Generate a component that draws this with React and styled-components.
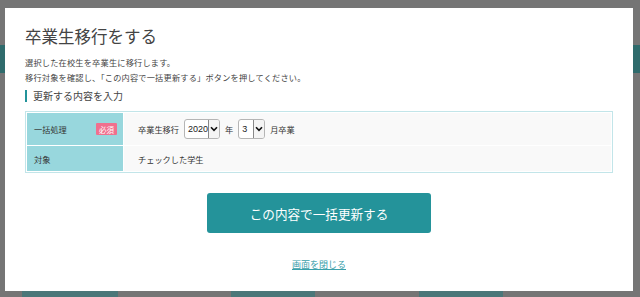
import React from 'react';
import styled, { createGlobalStyle } from 'styled-components';

const GlobalStyle = createGlobalStyle`
  html, body {
    margin: 0;
    padding: 0;
    background: #757575;
    font-family: "Noto Sans CJK JP", "Noto Sans", sans-serif;
    color: #333;
  }
`;

const Page = styled.div`
  position: relative;
  width: 640px;
  height: 297px;
  overflow: hidden;
  display: flex;
  flex-direction: column;
`;

const Header = styled.div`
  height: 45px;
`;

const Band = styled.div`
  height: 28px;
  background: #2f6b6c;
`;

const Filler = styled.div`
  flex: 1;
`;

const BackRow = styled.div`
  height: 6px;
  display: flex;
  padding-left: 22px;
`;

const BackCell = styled.div`
  width: ${p => p.w}px;
  background: ${p => (p.dark ? '#4b7779' : 'transparent')};
`;

const Modal = styled.div`
  position: absolute;
  top: 8px;
  left: 5px;
  width: 628px;
  height: 283px;
  box-sizing: border-box;
  background: #fff;
  padding: 17px 20px 0;
  display: flex;
  flex-direction: column;
`;

const Title = styled.h1`
  margin: 0;
  font-size: 16.5px;
  font-weight: 400;
  line-height: 22px;
  color: #444;
`;

const Desc = styled.p`
  margin: 8px 0 0;
  font-size: 8.2px;
  line-height: 14.5px;
  letter-spacing: 0.2px;
  color: #444;
`;

const SectionHead = styled.h2`
  margin: 6px 0 0;
  padding-left: 6px;
  border-left: 2px solid #23939a;
  font-size: 10px;
  font-weight: 400;
  line-height: 12px;
  color: #444;
`;

const Table = styled.table`
  margin-top: 9px;
  width: 100%;
  border: 1px solid #c2e5e9;
  border-spacing: 1px;
  background: #fff;
`;

const Th = styled.th`
  width: 96px;
  box-sizing: border-box;
  height: ${p => p.h}px;
  padding: 0 6px 0 7px;
  background: #98d7dd;
  font-size: 8.2px;
  font-weight: 400;
  text-align: left;
  color: #333;
`;

const ThInner = styled.div`
  display: flex;
  align-items: center;
  justify-content: space-between;
`;

const Badge = styled.span`
  display: inline-flex;
  align-items: center;
  justify-content: center;
  width: 21px;
  height: 12px;
  background: #f0708e;
  color: #fff;
  font-size: 7.5px;
  border-radius: 1px;
`;

const Td = styled.td`
  padding: 0 14px;
  background: #f9f9f9;
  font-size: 8.2px;
  color: #333;
`;

const Inline = styled.div`
  display: flex;
  align-items: center;
  gap: 5px;
`;

const FakeSelect = styled.div`
  display: flex;
  align-items: stretch;
  width: ${p => p.w}px;
  height: 20px;
  box-sizing: border-box;
  border: 1px solid #b5b5b5;
  border-radius: 3px;
  background: #fff;
  overflow: hidden;
`;

const SelectValue = styled.span`
  flex: 1;
  display: flex;
  align-items: center;
  padding-left: 3px;
  font-family: "Liberation Sans", Arial, sans-serif;
  font-size: 9px;
  color: #222;
`;

const Arrow = styled.span`
  width: 10px;
  display: flex;
  align-items: center;
  justify-content: center;
  border-left: 1px solid #888;
  background: #f4f4f4;
`;

const Button = styled.button`
  align-self: center;
  margin-top: 20px;
  width: 224px;
  height: 40px;
  border: none;
  border-radius: 3px;
  background: #24939a;
  color: #fff;
  font-family: inherit;
  font-size: 12.6px;
  cursor: pointer;
`;

const CloseLink = styled.a`
  align-self: center;
  margin-top: 26px;
  font-size: 9px;
  line-height: 12px;
  color: #3aa0aa;
  text-decoration: underline;
  cursor: pointer;
`;

const Chevron = () => (
  <svg width="8" height="6" viewBox="0 0 8 6">
    <path d="M1 1.2 L4 4.4 L7 1.2" fill="none" stroke="#111" strokeWidth="1.6" />
  </svg>
);

function Select({ value, w }) {
  return (
    <FakeSelect w={w}>
      <SelectValue>{value}</SelectValue>
      <Arrow><Chevron /></Arrow>
    </FakeSelect>
  );
}

export default function App() {
  return (
    <>
      <GlobalStyle />
      <Page>
        <Header />
        <Band />
        <Filler />
        <BackRow>
          <BackCell w={96} dark />
          <BackCell w={113} />
          <BackCell w={84} dark />
          <BackCell w={104} />
          <BackCell w={84} dark />
        </BackRow>

        <Modal>
          <Title>卒業生移行をする</Title>
          <Desc>
            選択した在校生を卒業生に移行します。<br />
            移行対象を確認し、「この内容で一括更新する」ボタンを押してください。
          </Desc>
          <SectionHead>更新する内容を入力</SectionHead>
          <Table>
            <tbody>
              <tr>
                <Th h={32}>
                  <ThInner>
                    一括処理
                    <Badge>必須</Badge>
                  </ThInner>
                </Th>
                <Td>
                  <Inline>
                    <span>卒業生移行</span>
                    <Select value="2020" w={36} />
                    <span>年</span>
                    <Select value="3" w={27} />
                    <span>月卒業</span>
                  </Inline>
                </Td>
              </tr>
              <tr>
                <Th h={25}>対象</Th>
                <Td>チェックした学生</Td>
              </tr>
            </tbody>
          </Table>
          <Button>この内容で一括更新する</Button>
          <CloseLink>画面を閉じる</CloseLink>
        </Modal>
      </Page>
    </>
  );
}
